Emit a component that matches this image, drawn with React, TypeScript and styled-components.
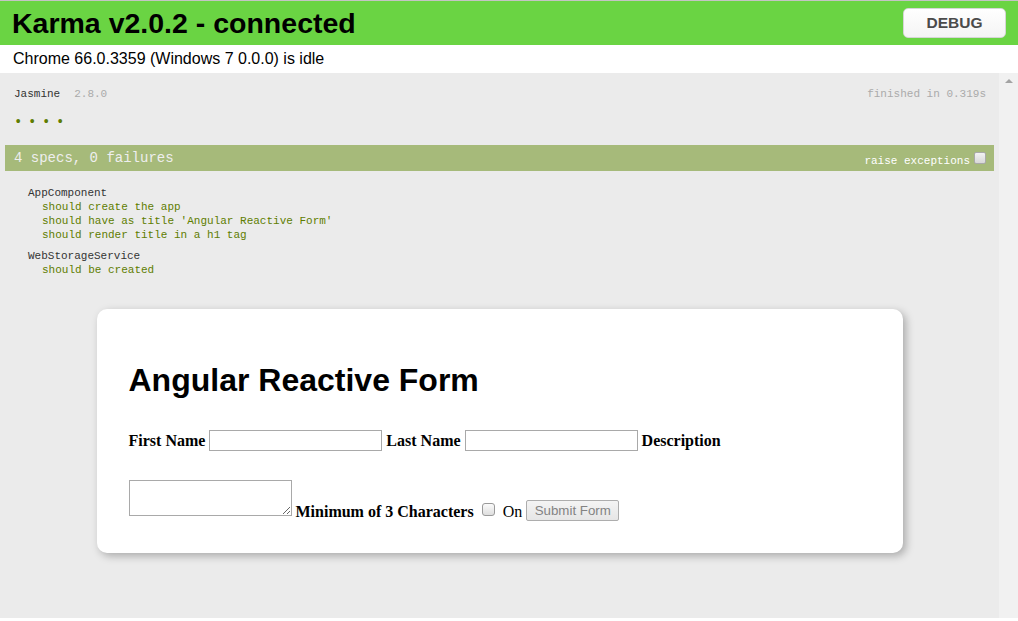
import React, { FunctionComponent } from "react";
import styled, { createGlobalStyle } from "styled-components";

const GlobalStyle = createGlobalStyle`
  html, body {
    margin: 0;
    padding: 0;
    background: #fff;
  }
  * {
    box-sizing: border-box;
  }
`;

const Page = styled.div`
  display: flex;
  flex-direction: column;
  height: 621px;
  overflow: hidden;
  font-family: "Liberation Sans", Arial, sans-serif;
`;

const Banner = styled.div`
  display: flex;
  align-items: center;
  justify-content: space-between;
  height: 45px;
  padding: 0 12px;
  background: #6ad443;
  border-top: 1px solid #c4c4c4;
`;

const Title = styled.h1`
  margin: 0;
  font-size: 28.5px;
  font-weight: bold;
  color: #000;
  line-height: 1;
`;

const DebugButton = styled.button`
  width: 103px;
  height: 30px;
  padding: 0;
  border: 1px solid #d6d6d6;
  border-radius: 5px;
  background: linear-gradient(#ffffff, #f4f4f4);
  font-family: "Liberation Sans", Arial, sans-serif;
  font-size: 15.5px;
  font-weight: bold;
  color: #4b4b4b;
`;

const Status = styled.div`
  height: 28px;
  padding: 4px 13px 0;
  background: #fff;
  font-size: 16px;
  color: #000;
  line-height: 20px;
`;

const Frame = styled.div`
  display: flex;
  flex: 1;
  min-height: 0;
  margin-bottom: 3px;
`;

const Reporter = styled.div`
  flex: 1;
  padding: 6px 5px 5px;
  background: #ebebeb;
  font-family: "Liberation Mono", "Courier New", monospace;
  font-size: 11px;
  line-height: 14px;
  color: #333;
`;

const Scrollbar = styled.div`
  width: 19px;
  background: #f1f1f1;
  display: flex;
  justify-content: center;
  padding-top: 6px;
`;

const ArrowUp = styled.div`
  width: 0;
  height: 0;
  border-left: 4px solid transparent;
  border-right: 4px solid transparent;
  border-bottom: 4px solid #a3a3a3;
`;

const JasmineBanner = styled.div`
  display: flex;
  justify-content: space-between;
  padding: 8px 8px 0 9px;
`;

const Version = styled.span`
  margin-left: 14px;
  color: #aaa;
`;

const Muted = styled.span`
  color: #aaa;
`;

const Symbols = styled.ul`
  display: flex;
  margin: 14px 0 0;
  padding: 0 0 0 9px;
  list-style: none;
`;

const Symbol = styled.li`
  width: 14px;
  height: 14px;
  font-size: 14px;
  color: #5e7d00;
`;

const Bar = styled.div`
  display: flex;
  align-items: center;
  justify-content: space-between;
  height: 26px;
  margin-top: 16px;
  padding: 0 8px 0 9px;
  background: #a6ba7a;
  color: #eee;
  font-size: 14px;
`;

const Options = styled.label`
  display: flex;
  align-items: center;
  gap: 4px;
  padding-top: 6px;
  font-size: 11px;
  color: #fff;
`;

const BarCheck = styled.input`
  appearance: none;
  width: 12px;
  height: 12px;
  margin: 0 0 6px;
  border: 1px solid #a9a9a9;
  border-radius: 2px;
  background: linear-gradient(#f2f2f2, #d8d8d8);
`;

const Summary = styled.div`
  margin-top: 15px;
  padding-left: 23px;
`;

const Suite = styled.div`
  & + & {
    margin-top: 7px;
  }
`;

const SuiteName = styled.div`
  color: #333;
`;

const Spec = styled.div`
  padding-left: 14px;
  color: #5e7d00;
`;

const Card = styled.div`
  width: 806px;
  margin: 32px auto 0;
  padding: 32px;
  background: #fff;
  border-radius: 10px;
  box-shadow: 3px 3px 8px rgba(0, 0, 0, 0.28);
  line-height: normal;
`;

const CardTitle = styled.h1`
  margin: 21.4px 0 0;
  font-family: "Liberation Sans", Arial, sans-serif;
  font-size: 32px;
  font-weight: bold;
  color: #000;
`;

const FormRow = styled.div<{ $end?: boolean }>`
  display: flex;
  align-items: ${(p) => (p.$end ? "flex-end" : "center")};
  gap: 4px;
  margin-top: ${(p) => (p.$end ? "29px" : "31px")};
  font-family: "Liberation Serif", "Times New Roman", serif;
  font-size: 16px;
  color: #000;
`;

const Label = styled.span<{ $plain?: boolean }>`
  font-weight: ${(p) => (p.$plain ? "normal" : "bold")};
`;

const TextInput = styled.input`
  width: 173px;
  height: 21px;
  padding: 1px 2px;
  border: 1px solid #a9a9a9;
  font-size: 13px;
`;

const TextArea = styled.textarea`
  width: 163px;
  height: 36px;
  margin: 0 0 5px;
  border: 1px solid #a9a9a9;
  font-family: "Liberation Mono", monospace;
  font-size: 13px;
`;

const CheckBox = styled.input`
  appearance: none;
  width: 13px;
  height: 13px;
  margin: 0 4px 5px 4px;
  border: 1px solid #9a9a9a;
  border-radius: 3px;
  background: linear-gradient(#fbfbfb, #dedede);
`;

const SubmitButton = styled.button`
  width: 93px;
  height: 21px;
  padding: 0;
  border: 1px solid #adadad;
  border-radius: 2px;
  background: linear-gradient(#f4f4f4, #e6e6e6);
  font-family: "Liberation Sans", Arial, sans-serif;
  font-size: 13.3px;
  color: #838383;
`;

const specs = [
  { suite: "AppComponent", items: ["should create the app", "should have as title 'Angular Reactive Form'", "should render title in a h1 tag"] },
  { suite: "WebStorageService", items: ["should be created"] },
];

const App: FunctionComponent = () => {
  return (
    <Page>
      <GlobalStyle />
      <Banner>
        <Title>Karma v2.0.2 - connected</Title>
        <DebugButton>DEBUG</DebugButton>
      </Banner>
      <Status>Chrome 66.0.3359 (Windows 7 0.0.0) is idle</Status>

      <Frame>
        <Reporter>
          <JasmineBanner>
            <span>
              Jasmine<Version>2.8.0</Version>
            </span>
            <Muted>finished in 0.319s</Muted>
          </JasmineBanner>

          <Symbols>
            {[0, 1, 2, 3].map((i) => (
              <Symbol key={i}>•</Symbol>
            ))}
          </Symbols>

          <Bar>
            <span>4 specs, 0 failures</span>
            <Options>
              raise exceptions
              <BarCheck type="checkbox" />
            </Options>
          </Bar>

          <Summary>
            {specs.map((s) => (
              <Suite key={s.suite}>
                <SuiteName>{s.suite}</SuiteName>
                {s.items.map((it) => (
                  <Spec key={it}>{it}</Spec>
                ))}
              </Suite>
            ))}
          </Summary>

          <Card>
            <CardTitle>Angular Reactive Form</CardTitle>
            <FormRow>
              <Label>First Name</Label>
              <TextInput type="text" />
              <Label>Last Name</Label>
              <TextInput type="text" />
              <Label>Description</Label>
            </FormRow>
            <FormRow $end>
              <TextArea />
              <Label>Minimum of 3 Characters</Label>
              <CheckBox type="checkbox" />
              <Label $plain>On</Label>
              <SubmitButton disabled>Submit Form</SubmitButton>
            </FormRow>
          </Card>
        </Reporter>
        <Scrollbar>
          <ArrowUp />
        </Scrollbar>
      </Frame>
    </Page>
  );
};

export default App;
